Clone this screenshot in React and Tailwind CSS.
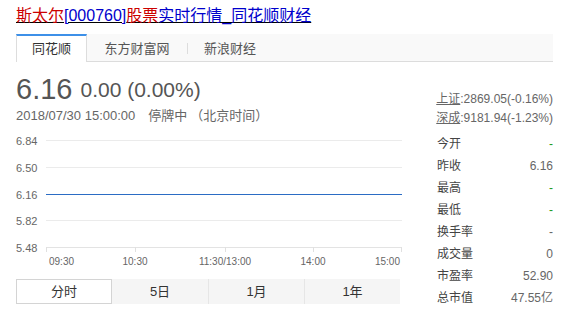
import React from "react";

const stats = [
  { label: "今开", value: "-", green: true },
  { label: "昨收", value: "6.16" },
  { label: "最高", value: "-", green: true },
  { label: "最低", value: "-", green: true },
  { label: "换手率", value: "-" },
  { label: "成交量", value: "0" },
  { label: "市盈率", value: "52.90" },
  { label: "总市值", value: "47.55亿" },
];

const yLabels = [
  { text: "6.84", y: 12.5 },
  { text: "6.50", y: 39.5 },
  { text: "6.16", y: 66.5 },
  { text: "5.82", y: 92.5 },
  { text: "5.48", y: 119.5 },
];

const ticks = [30.5, 119.5, 209.5, 297.5, 385.5];

function Chart() {
  return (
    <svg width="386" height="142" className="block">
      {yLabels.map((l) => (
        <text key={l.text} x="0" y={l.y} fontSize="11" fill="#666" dominantBaseline="central">
          {l.text}
        </text>
      ))}
      {[12.5, 39.5, 92.5].map((y) => (
        <line key={y} x1="30" x2="386" y1={y} y2={y} stroke="#ebebeb" strokeWidth="1" />
      ))}
      <line x1="30" x2="386" y1="119.5" y2="119.5" stroke="#e3e3e3" strokeWidth="1" />
      {ticks.map((x) => (
        <line key={x} x1={x} x2={x} y1="119" y2="124" stroke="#e0e0e0" strokeWidth="1" />
      ))}
      <line x1="30" x2="386" y1="66.5" y2="66.5" stroke="#2b6cc4" strokeWidth="1" />
      <g fontSize="10" fill="#666" dominantBaseline="central">
        <text x="33" y="133">09:30</text>
        <text x="119" y="133" textAnchor="middle">10:30</text>
        <text x="209" y="133" textAnchor="middle">11:30/13:00</text>
        <text x="297" y="133" textAnchor="middle">14:00</text>
        <text x="384" y="133" textAnchor="end">15:00</text>
      </g>
    </svg>
  );
}

export default function App() {
  return (
    <div className="w-[579px] h-[319px] bg-white pl-[16px] font-['Liberation_Sans','Noto_Sans_CJK_SC',sans-serif] overflow-hidden">
      <div className="w-[537px]">
        {/* 标题 */}
        <h1 className="pt-[6px] text-[16px] leading-[20px] font-normal underline">
          <span className="text-[#cc0000]">斯太尔</span>
          <span className="text-[#0000cc]">[000760]</span>
          <span className="text-[#cc0000]">股票</span>
          <span className="text-[#0000cc]">实时行情_同花顺财经</span>
        </h1>

        {/* 来源标签 */}
        <div className="mt-[8px] flex bg-[#f9f9f9] border-b border-[#dcdcdc] text-[13px] text-[#555]">
          <div className="relative -mb-px h-[28px] w-[71px] bg-white border-t-2 border-t-[#3d90e8] border-x border-x-[#dddddd] flex items-center justify-center text-[#333]">
            同花顺
          </div>
          <div className="h-[27px] pt-[2px] w-[100px] flex items-center justify-center">东方财富网</div>
          <div className="w-px h-[11px] bg-[#dddddd] self-center mt-[2px]" />
          <div className="h-[27px] pt-[2px] w-[84px] flex items-center justify-center">新浪财经</div>
        </div>

        <div className="flex">
          {/* 左侧：价格与图表 */}
          <div className="w-[386px]">
            <div className="mt-[12px] flex items-end text-[#555]">
              <span className="text-[29px] leading-[30px]">6.16</span>
              <span className="ml-[8px] text-[21px] leading-[29px]">0.00 (0.00%)</span>
            </div>
            <div className="mt-[4px] text-[13px] leading-[16px] text-[#666]">
              <span>2018/07/30 15:00:00</span>
              <span className="ml-[13px]">停牌中</span>
              <span className="ml-[3px]">（北京时间）</span>
            </div>
            <div className="mt-[4px]">
              <Chart />
            </div>
            <div className="mt-[9px] grid grid-cols-4 w-[384px] h-[25px] bg-[#f5f5f5] text-[13px] text-[#333]">
              <div className="bg-white border border-[#d4d4d4] flex items-center justify-center">分时</div>
              <div className="flex items-center justify-center">5日</div>
              <div className="border-l border-[#e6e6e6] flex items-center justify-center">1月</div>
              <div className="border-l border-[#e6e6e6] flex items-center justify-center">1年</div>
            </div>
          </div>

          {/* 右侧：指数与统计 */}
          <div className="ml-[34px] w-[117px] text-[12px]">
            <div className="mt-[28px] text-right text-[#666] leading-[19px]">
              <div>
                <span className="underline">上证</span>:2869.05(-0.16%)
              </div>
              <div>
                <span className="underline">深成</span>:9181.94(-1.23%)
              </div>
            </div>
            <div className="mt-[5px]">
              {stats.map((s) => (
                <div key={s.label} className="h-[22px] flex items-center justify-between pl-[1px]">
                  <span className="text-[#444]">{s.label}</span>
                  <span className={s.green ? "text-[#229922]" : "text-[#666]"}>{s.value}</span>
                </div>
              ))}
            </div>
          </div>
        </div>
      </div>
    </div>
  );
}
